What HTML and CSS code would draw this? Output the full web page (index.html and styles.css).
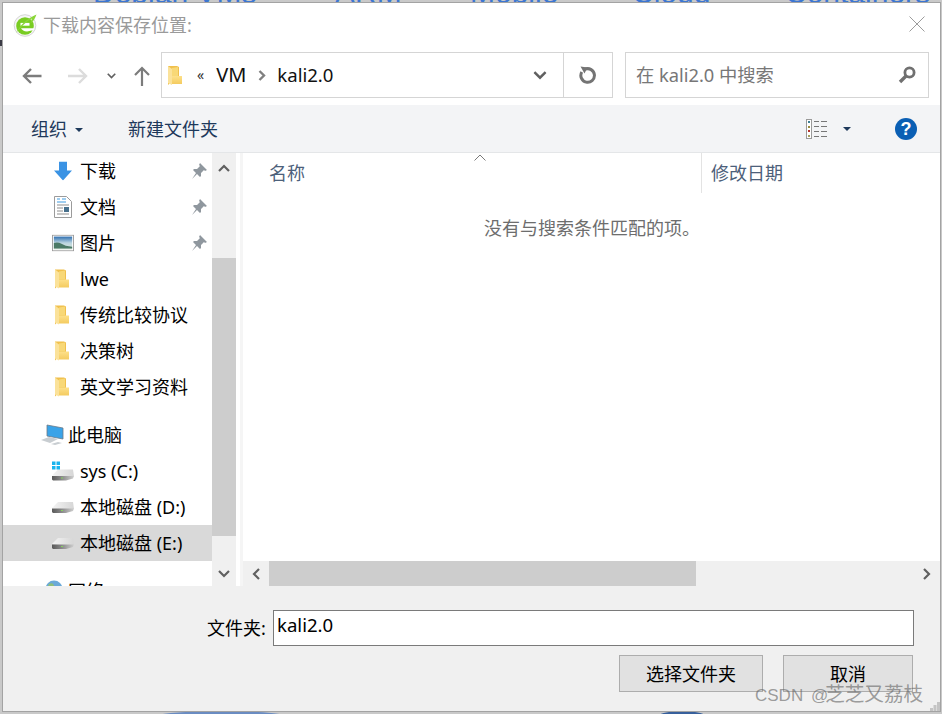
FILE: index.html
```html
<!DOCTYPE html>
<html lang="zh-CN">
<head>
<meta charset="utf-8">
<title>下载内容保存位置</title>
<link rel="stylesheet" href="styles.css">
</head>
<body>
<svg class="defs" width="0" height="0" aria-hidden="true">
  <defs>
    <linearGradient id="fold" x1="0" y1="0" x2="0" y2="1"><stop offset="0" stop-color="#fde08a"/><stop offset="1" stop-color="#f4cb5f"/></linearGradient>
    <linearGradient id="drivetop" x1="0" y1="0" x2="1" y2="0"><stop offset="0" stop-color="#f4f4f4"/><stop offset="1" stop-color="#d6d6d6"/></linearGradient>
    <linearGradient id="drivefront" x1="0" y1="0" x2="1" y2="0"><stop offset="0" stop-color="#5a5a5a"/><stop offset=".45" stop-color="#8a8a8a"/><stop offset="1" stop-color="#d0d0d0"/></linearGradient>
    <symbol id="folder" viewBox="0 0 14 21">
      <path d="M0 1h9l2 1v15H3l-3 3z" fill="#f0c04d"/>
      <path d="M0 1l4 3v16L0 18z" fill="#fbe29a"/>
      <path d="M4 11h10v8H4z" fill="url(#fold)"/>
      <path d="M4 3l6-1v9H4z" fill="#f8d877"/>
    </symbol>
    <symbol id="drive" viewBox="0 0 24 14">
      <path d="M1 8L7 2h15l1 7-8 1z" fill="url(#drivetop)"/>
      <path d="M1 8.500h22l-1 2.500-7 2H2l-1-1z" fill="url(#drivefront)"/>
      <path d="M10 10h2v1h-2z" fill="#86d15f"/>
    </symbol>
    <symbol id="pin" viewBox="0 0 16 16">
      <path d="M9 0l7 7-2 1-1-1-3 3 0 3-1 1-3-3-5 5 4-6-3-3 1-1h3l3-3-1-1z" fill="#8f979e"/>
    </symbol>
    <symbol id="chev-up" viewBox="0 0 12 8">
      <path d="M1 7l5-5 5 5" fill="none" stroke="#606060" stroke-width="2.2"/>
    </symbol>
    <symbol id="chev-down" viewBox="0 0 12 8">
      <path d="M1 1l5 5 5-5" fill="none" stroke="#606060" stroke-width="2.2"/>
    </symbol>
  </defs>
</svg>

<div class="desktop-text">
  <span class="dt-a">Debian VMs</span><span class="dt-b">ARM</span><span class="dt-c">Mobile</span><span class="dt-d">Cloud</span><span class="dt-e">Containers</span>
</div>
<div class="blob blob-a"></div>
<div class="blob blob-b"></div>
<div class="edge-mark"></div>

<main class="dialog">
  <header class="titlebar">
    <svg class="app-icon" width="24" height="24" viewBox="0 0 24 24">
      <circle cx="12" cy="12.500" r="10.800" fill="#f6f6f6" stroke="#d6d6d6" stroke-width="1"/>
      <circle cx="12" cy="13" r="8.800" fill="#79cc22"/>
      <path d="M7.500 11.300h9" stroke="#fff" stroke-width="2.800"/>
      <path d="M8 15.200h13v1.800l-7 1.400c-3 0-5-1.400-6-3.200z" fill="#fff"/>
      <path d="M3 20C7 12 15 5 23.500 1.500c-1.500 4-3 7-6 9 1-2 1.500-3.500 1-5C13 8.500 8 14 3 20z" fill="#8ad637"/>
    </svg>
    <span class="title-text">下载内容保存位置:</span>
    <svg class="close" width="16" height="16" viewBox="0 0 16 16"><path d="M.5.5l15 15M15.500.5l-15 15" stroke="#9c9c9c" stroke-width="1" fill="none"/></svg>
  </header>

  <nav class="navbar">
    <svg class="nav-back" width="20" height="16" viewBox="0 0 20 16"><path d="M19.500 8H2M9 1L2 8l7 7" fill="none" stroke="#7c7c7c" stroke-width="2.400"/></svg>
    <svg class="nav-fwd" width="20" height="16" viewBox="0 0 20 16"><path d="M0 8h17.500M11 1l7 7-7 7" fill="none" stroke="#dcdcdc" stroke-width="2.400"/></svg>
    <svg class="nav-drop" width="9" height="6" viewBox="0 0 12 8"><use href="#chev-down"/></svg>
    <svg class="nav-up" width="16" height="20" viewBox="0 0 16 20"><path d="M8 20V2M1 9l7-7 7 7" fill="none" stroke="#7c7c7c" stroke-width="2.200"/></svg>
    <div class="address">
      <svg class="addr-folder" width="14" height="21"><use href="#folder"/></svg>
      <span class="addr-more">«</span>
      <span class="crumb crumb-vm">VM</span>
      <svg class="crumb-sep" width="8" height="11" viewBox="0 0 8 11"><path d="M1.500 1l4.500 4.500-4.500 4.500" fill="none" stroke="#808080" stroke-width="2.400"/></svg>
      <span class="crumb">kali2.0</span>
      <svg class="addr-drop" width="14" height="9" viewBox="0 0 12 8"><use href="#chev-down"/></svg>
      <div class="addr-refresh">
        <svg width="18" height="18" viewBox="0 0 18 18"><path d="M6 3.200A6.800 6.800 0 1 1 2.800 6" fill="none" stroke="#747474" stroke-width="3"/><path d="M1.500 .5l7 1-3 6z" fill="#747474"/></svg>
      </div>
    </div>
    <div class="search">
      <span class="search-text">在 kali2.0 中搜索</span>
      <svg width="18" height="18" viewBox="0 0 18 18"><circle cx="11.500" cy="6.500" r="4.600" fill="none" stroke="#707070" stroke-width="2.800"/><path d="M8 10l-6 6" stroke="#707070" stroke-width="3.400"/></svg>
    </div>
  </nav>

  <section class="toolbar">
    <span class="tool-label">组织</span>
    <span class="caret caret-org"></span>
    <span class="tool-label tool-new">新建文件夹</span>
    <svg class="view-icon" width="22" height="20" viewBox="0 0 22 20">
      <rect x=".5" y=".5" width="5" height="19" fill="#fff" stroke="#9a9a9a"/>
      <rect x="2" y="2" width="2" height="2" fill="#3f7f93"/>
      <rect x="2" y="7" width="2" height="2" fill="#9a8c3c"/>
      <rect x="2" y="11" width="2" height="2" fill="#b5342c"/>
      <rect x="2" y="16" width="2" height="2" fill="#a8a060"/>
      <path d="M8 2.500h5M15 2.500h6M8 7.500h5M15 7.500h6M8 12.500h5M15 12.500h6M8 17.500h5M15 17.500h6" stroke="#777" stroke-width="1"/>
    </svg>
    <span class="caret caret-view"></span>
    <span class="help">?</span>
  </section>

  <section class="main">
    <aside class="tree">
      <ul class="tree-list">
        <li class="row"><svg class="ic ic-dl" width="18" height="19" viewBox="0 0 18 19"><path d="M5 0h8v9h5L9 19 0 9h5z" fill="#3a93e4"/></svg><span class="row-text">下载</span><svg class="pin" width="16" height="16"><use href="#pin"/></svg></li>
        <li class="row"><svg class="ic" width="24" height="24" viewBox="0 0 24 24"><path d="M3.500 1.500h12l5 5v16h-17z" fill="#fff" stroke="#9b9b9b"/><path d="M6 4h3M11 4h4M6 7h9" stroke="#3f9be0" stroke-width="1"/><path d="M6 10h12M6 13h6M6 16h6M6 19h12" stroke="#8d8d8d" stroke-width="1"/><rect x="13" y="12" width="5" height="5" fill="#47708c"/></svg><span class="row-text">文档</span><svg class="pin" width="16" height="16"><use href="#pin"/></svg></li>
        <li class="row"><svg class="ic ic-pic" width="22" height="17" viewBox="0 0 24 18"><defs><linearGradient id="sky" x1="0" y1="0" x2="0" y2="1"><stop offset="0" stop-color="#2f6fb0"/><stop offset=".5" stop-color="#bcd6e0"/><stop offset="1" stop-color="#d8e4d8"/></linearGradient></defs><rect x=".5" y=".5" width="23" height="17" fill="#fff" stroke="#9b9b9b"/><rect x="2" y="2" width="20" height="14" fill="url(#sky)"/><path d="M2 9c5-2 9 1 13 3l7 1v2H2z" fill="#4b7a66"/></svg><span class="row-text">图片</span><svg class="pin" width="16" height="16"><use href="#pin"/></svg></li>
        <li class="row"><svg class="ic ic-f" width="14" height="21"><use href="#folder"/></svg><span class="row-text">lwe</span></li>
        <li class="row"><svg class="ic ic-f" width="14" height="21"><use href="#folder"/></svg><span class="row-text">传统比较协议</span></li>
        <li class="row"><svg class="ic ic-f" width="14" height="21"><use href="#folder"/></svg><span class="row-text">决策树</span></li>
        <li class="row"><svg class="ic ic-f" width="14" height="21"><use href="#folder"/></svg><span class="row-text">英文学习资料</span></li>
        <li class="row group-start"><svg class="ic" width="24" height="22" viewBox="0 0 24 22"><path d="M7 1l16 3v11L7 12z" fill="#3aa3e8" stroke="#6d7a86" stroke-width=".8"/><path d="M1 16l8-3 9 2-8 4zM11 20l7-2 4 1-7 2z" fill="#c8cdd1"/></svg><span class="row-text">此电脑</span></li>
        <li class="row"><svg class="ic" width="24" height="21" viewBox="0 0 24 21"><g transform="translate(0 7)"><use href="#drive" width="24" height="14"/></g><path d="M1 1h3.500v3.500H1zM5.500 1H9v3.500H5.500zM1 5.500h3.500V9H1zM5.500 5.500H9V9H5.500z" fill="#18b4ee"/></svg><span class="row-text">sys (C:)</span></li>
        <li class="row"><svg class="ic" width="24" height="14"><use href="#drive"/></svg><span class="row-text">本地磁盘 (D:)</span></li>
        <li class="row row-active"><svg class="ic" width="24" height="14"><use href="#drive"/></svg><span class="row-text">本地磁盘 (E:)</span></li>
        <li class="row group-start"><svg class="ic" width="22" height="22" viewBox="0 0 22 22"><circle cx="14" cy="9" r="8.500" fill="#6ba9d8"/><path d="M9 4c3-2 5 0 5 2s-4 2-4 5c-2-1-3-4-1-7z" fill="#8fbf7a"/></svg><span class="row-text">网络</span></li>
      </ul>
      <div class="vscroll">
        <span class="sb-btn"><svg width="12" height="8"><use href="#chev-up"/></svg></span>
        <span></span>
        <span class="vthumb"></span>
        <span></span>
        <span class="sb-btn"><svg width="12" height="8"><use href="#chev-down"/></svg></span>
      </div>
    </aside>
    <div class="gutter"></div>
    <div class="content">
      <div class="columns">
        <span class="col col-name">名称<svg class="sort" width="12" height="7" viewBox="0 0 12 7"><path d="M.5 6.500L6 1l5.500 5.500" fill="none" stroke="#7a7a7a"/></svg></span>
        <span class="col col-date">修改日期</span>
      </div>
      <p class="empty">没有与搜索条件匹配的项。</p>
      <div class="hscroll">
        <span class="hs-btn"><svg width="8" height="12" viewBox="0 0 8 12"><path d="M7 1L2 6l5 5" fill="none" stroke="#606060" stroke-width="2.200"/></svg></span>
        <span class="hthumb"></span>
        <span class="hs-btn hs-right"><svg width="8" height="12" viewBox="0 0 8 12"><path d="M1 1l5 5-5 5" fill="none" stroke="#606060" stroke-width="2.200"/></svg></span>
      </div>
    </div>
  </section>

  <footer class="footer">
    <div class="field">
      <label class="field-label" for="folder-name">文件夹:</label>
      <div class="field-input" id="folder-name">kali2.0</div>
    </div>
    <div class="actions">
      <button class="btn btn-select">选择文件夹</button>
      <button class="btn btn-cancel">取消</button>
    </div>
  </footer>
</main>
<div class="watermark"><span class="wm-latin">CSDN @</span><span class="wm-cjk">芝芝又荔枝</span></div>
<svg class="grip" width="10" height="9" viewBox="0 0 10 9"><path d="M7 0h3v3H7zM3.500 3h3v3h-3zM7 3h3v3H7zM0 6h3v3H0zM3.500 6h3v3h-3zM7 6h3v3H7z" fill="#c4c4c4"/></svg>
</body>
</html>
```
FILE: styles.css
```css
* { box-sizing: border-box; }
html, body { margin: 0; padding: 0; }
body {
  width: 942px;
  height: 714px;
  position: relative;
  overflow: hidden;
  background: #c9c9c9;
  font-family: "Noto Sans", "Noto Sans CJK SC", sans-serif;
  font-size: 18px;
  color: #000;
}
.defs { position: absolute; }

.desktop-text {
  position: absolute;
  left: 0;
  top: -23px;
  width: 942px;
  height: 32px;
  font-family: "Liberation Sans", sans-serif;
  font-size: 30px;
  line-height: 32px;
  color: #3c76d2;
  white-space: nowrap;
}
.desktop-text span { position: absolute; top: 0; }
.dt-a { left: 93px; }
.dt-b { left: 335px; }
.dt-c { left: 470px; }
.dt-d { left: 632px; }
.dt-e { left: 785px; }

.blob { position: absolute; top: 711px; height: 14px; border-radius: 50%; }
.blob-a { left: 150px; width: 142px; background: #6a8cc2; }
.blob-b { left: 656px; width: 52px; background: #38609c; }
.edge-mark { position: absolute; left: 0; top: 40px; width: 2px; height: 6px; background: #3b3b45; }

.dialog {
  position: absolute;
  left: 2px;
  top: 2px;
  width: 939px;
  height: 710px;
  display: flex;
  flex-direction: column;
  background: #fff;
  border: 1px solid #a3a3a3;
}

.titlebar {
  height: 35px;
  flex: none;
  display: flex;
  align-items: center;
  padding: 9px 15px 0 10px;
}
.app-icon { flex: none; margin-right: 6px; }
.title-text { color: #9a9a9a; font-size: 18px; line-height: 24px; }
.close { margin-left: auto; margin-top: -3px; }

.navbar {
  height: 67px;
  flex: none;
  display: flex;
  align-items: center;
  padding: 0 11px 0 19px;
}
.nav-back { margin-right: 26px; margin-top: 8px; }
.nav-fwd { margin-right: 19px; margin-top: 8px; }
.nav-drop { margin-right: 18px; margin-top: 8px; }
.nav-up { margin-right: 11px; margin-top: 8px; }
.address, .search {
  height: 46px;
  margin-top: 7px;
  border: 1px solid #d5d5d5;
  display: flex;
  align-items: center;
  background: #fff;
}
.address { width: 452px; padding-left: 6px; }
.addr-folder { flex: none; margin-right: 15px; }
.addr-more { font-size: 14px; margin-right: 11px; line-height: 20px; color: #333; }
.crumb { font-size: 18.6px; line-height: 24px; color: #111; }
.crumb-vm { font-size: 20px; margin-left: 1px; }
.crumb-sep { margin: 1px 11px 0 12px; flex: none; }
.addr-drop { margin-left: auto; margin-right: 16px; flex: none; }
.addr-refresh {
  width: 49px;
  height: 100%;
  flex: none;
  border-left: 1px solid #d5d5d5;
  display: flex;
  align-items: center;
  justify-content: center;
}
.search {
  width: 304px;
  margin-left: 12px;
  padding: 0 12px 0 10px;
  justify-content: space-between;
}
.search-text { color: #777; font-size: 18.3px; line-height: 24px; }

.toolbar {
  height: 47px;
  flex: none;
  display: flex;
  align-items: center;
  padding: 0 23px 0 28px;
  background: #f3f4f6;
}
.tool-label { color: #1e395b; font-size: 18px; line-height: 24px; }
.caret {
  width: 0;
  height: 0;
  border-left: 4px solid transparent;
  border-right: 4px solid transparent;
  border-top: 4px solid #1e395b;
}
.caret-org { margin: 2px 0 0 8px; }
.tool-new { margin-left: 45px; }
.view-icon { margin-left: auto; }
.caret-view { margin: 0 44px 0 15px; }
.help {
  width: 22px;
  height: 22px;
  border-radius: 50%;
  background: #0a5fb4;
  color: #fff;
  font-family: "Liberation Sans", sans-serif;
  font-weight: 700;
  font-size: 18px;
  line-height: 22px;
  text-align: center;
}

.main {
  height: 434px;
  flex: none;
  display: flex;
  border-top: 1px solid #e4e6e8;
}
.tree {
  width: 233px;
  flex: none;
  display: flex;
  overflow: hidden;
}
.tree-list {
  width: 209px;
  flex: none;
  margin: 0;
  padding: 0;
  list-style: none;
  height: 433px;
  overflow: hidden;
}
.row {
  height: 36px;
  display: flex;
  align-items: center;
  position: relative;
  padding-left: 77px;
}
.group-start { margin-top: 12px; padding-left: 65px; }
.row-active { background: #d9d9d9; }
.row .ic { position: absolute; left: 48px; top: 50%; transform: translateY(-50%); }
.group-start .ic { left: 37px; }
.row .ic-f { left: 52px; }
.row .ic-dl { left: 51px; }
.row .ic-pic { left: 49px; }
.row-text { font-size: 18px; line-height: 24px; color: #000; white-space: nowrap; }
.pin { margin-left: auto; margin-right: 5px; flex: none; }

.vscroll {
  width: 24px;
  flex: none;
  height: 433px;
  background: #f0f0f0;
  display: grid;
  grid-template-rows: 30px 75px 278px 1fr 25px;
}
.sb-btn { display: flex; align-items: center; justify-content: center; }
.vthumb { background: #cdcdcd; }

.gutter {
  width: 7px;
  flex: none;
  background: linear-gradient(to right, #fff 0 4px, #f5f5f5 4px);
}
.content {
  flex: 1;
  min-width: 0;
  display: flex;
  flex-direction: column;
}
.columns {
  height: 40px;
  flex: none;
  display: flex;
  color: #4c607a;
}
.col { font-size: 18px; line-height: 24px; padding-top: 8px; }
.col-name { width: 459px; padding-left: 26px; border-right: 1px solid #e3e3e3; position: relative; }
.col-date { padding-left: 9px; }
.sort { position: absolute; left: 231px; top: 1px; }
.empty {
  margin: 23px 0 0;
  flex: 1;
  padding-left: 241px;
  font-size: 18px;
  line-height: 24px;
  color: #6d6d6d;
}
.hscroll {
  height: 25px;
  flex: none;
  display: flex;
  align-items: stretch;
  background: #f0f0f0;
}
.hs-btn { width: 26px; flex: none; display: flex; align-items: center; justify-content: center; }
.hthumb { width: 427px; flex: none; background: #cdcdcd; }
.hs-right { margin-left: auto; }

.footer {
  flex: 1;
  background: #f0f0f0;
  display: flex;
  flex-direction: column;
  padding-top: 24px;
}
.field { display: flex; align-items: center; padding-left: 204px; }
.field-label { font-size: 18px; line-height: 24px; width: 66px; flex: none; }
.field-input {
  width: 641px;
  height: 36px;
  border: 1px solid #7a7a7a;
  background: #fff;
  padding-left: 3px;
  font-size: 18.6px;
  line-height: 28px;
}
.actions { display: flex; margin-top: 9px; padding-left: 616px; gap: 20px; }
.btn {
  height: 37px;
  border: 1px solid #adadad;
  background: #e1e1e1;
  font: inherit;
  font-size: 18px;
  line-height: 24px;
  color: #000;
  padding: 0;
}
.btn-select { width: 144px; }
.btn-cancel { width: 130px; }

.watermark {
  position: absolute;
  left: 755px;
  top: 681px;
  display: flex;
  align-items: baseline;
  line-height: 26px;
  color: rgba(100, 100, 100, .62);
  white-space: nowrap;
}
.wm-latin { font-family: "Liberation Sans", sans-serif; font-size: 17px; margin-right: -3px; word-spacing: 3px; }
.wm-cjk { font-size: 19.6px; }
.grip { position: absolute; left: 930px; top: 702px; }
```
